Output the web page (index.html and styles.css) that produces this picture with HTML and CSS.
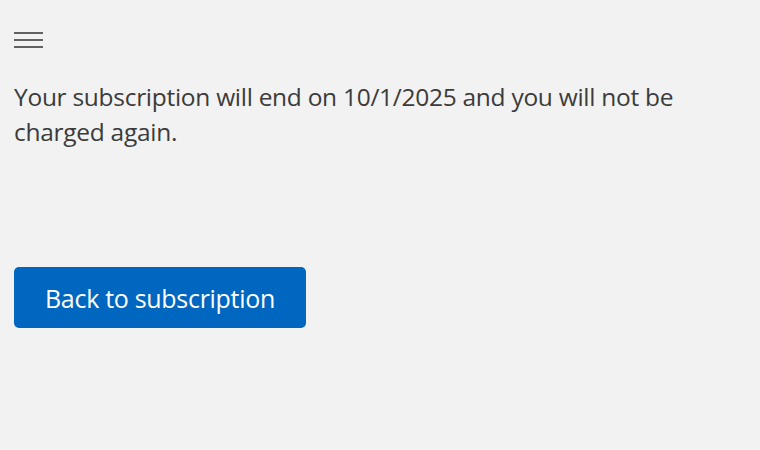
FILE: index.html
```html
<!DOCTYPE html>
<html lang="en">
<head>
<meta charset="utf-8">
<link rel="stylesheet" href="styles.css">
</head>
<body>
<div class="page">
  <button class="menu" aria-label="Menu">
    <svg width="30" height="16" viewBox="0 0 30 16"><path d="M0 1h29M0 8h29M0 15h29" stroke="#333" stroke-width="1.4" fill="none"/></svg>
  </button>
  <p class="message">Your subscription will end on 10/1/2025 and you will not be charged again.</p>
  <button class="primary">Back to subscription</button>
</div>
</body>
</html>
```
FILE: styles.css
```css
html, body { margin: 0; padding: 0; background: #f2f2f2; }
body { font-family: "Open Sans", "Noto Sans", sans-serif; color: #3b3b3b; }
.page { padding: 32px 14px 0 14px; display: flex; flex-direction: column; align-items: flex-start; }
.menu { background: none; border: 0; padding: 0; margin: 0; display: block; line-height: 0; }
.message { margin: 31px 0 0 0; font-size: 24.5px; letter-spacing: -0.28px; line-height: 35px; max-width: 690px; }
.primary { margin-top: 118px; width: 292px; height: 61px; background: #0067c0; color: #fff; border: 0; border-radius: 5px; font-family: inherit; font-size: 25px; font-weight: 500; letter-spacing: -0.3px; padding: 0; }
```
